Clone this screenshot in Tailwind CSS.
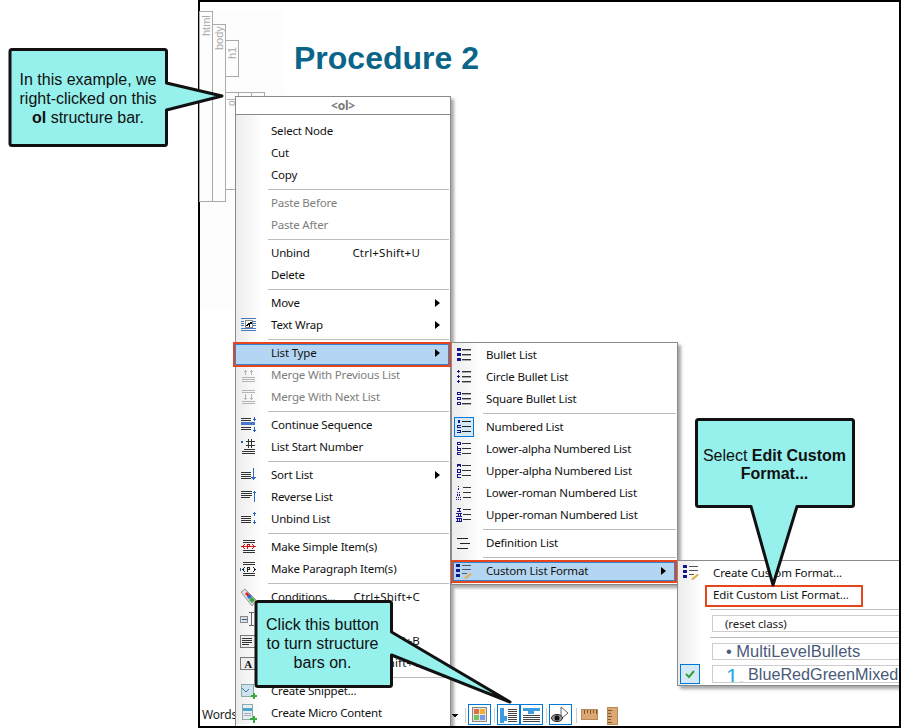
<!DOCTYPE html>
<html lang="en">

<head>
    <meta charset="UTF-8">
    <title>Procedure 2</title>
    <script src="https://cdn.jsdelivr.net/npm/@tailwindcss/browser@4"></script>
</head>

<body class="bg-white overflow-hidden">
    <div class="relative w-[901px] h-[728px] overflow-hidden font-['Liberation_Sans',sans-serif]">

        <!-- editor window -->
        <div class="absolute left-[198px] top-0 w-[703px] h-[728px] border-2 border-black bg-white">
            <div class="absolute left-0 top-[8px] w-[84px] h-[300px] bg-[#fdfdfd]"></div>
            <!-- structure bars -->
            <div class="absolute -left-px top-[9px] w-[14px] h-[191px] border border-[#aaa] flex justify-center pt-[4px]"><span class="[writing-mode:vertical-rl] rotate-180 h-[20px] text-[11px] leading-none text-[#aaa]">html</span></div>
            <div class="absolute left-[12px] top-[22px] w-[14px] h-[178px] border border-[#aaa] flex justify-center pt-[3px]"><span class="[writing-mode:vertical-rl] rotate-180 h-[22px] text-[11px] leading-none text-[#aaa]">body</span></div>
            <div class="absolute left-[25px] top-[38px] w-[14px] h-[37px] border border-[#aaa] flex justify-center pt-[8px]"><span class="[writing-mode:vertical-rl] rotate-180 h-[10px] text-[11px] leading-none text-[#aaa]">h1</span></div>
            <div class="absolute left-[25px] top-[90px] w-[14px] h-[98px] border border-[#aaa] flex justify-center pt-[3px]"><span class="[writing-mode:vertical-rl] rotate-180 h-[10px] text-[10px] leading-none text-[#aaa]">ol</span></div>
            <div class="absolute left-[38px] top-[90px] w-[14px] h-[20px] border border-[#aaa]"></div>
            <div class="absolute left-[51px] top-[90px] w-[14px] h-[20px] border border-[#aaa]"></div>

            <h1 class="absolute left-[94px] top-[37px] text-[32px] leading-[38px] font-bold text-[#0b6588]">Procedure 2</h1>

            <!-- status bar -->
            <div class="absolute left-[2px] top-[705px] text-[12px] tracking-[-0.2px] leading-[16px] text-[#222] font-['Noto_Sans',sans-serif]">Words</div>
            <div class="absolute left-[252px] top-[700px] h-[26px] w-[170px]">
                <svg width="170" height="26" viewBox="0 0 170 26" shape-rendering="crispEdges">
                    <path d="M0 12h6l-3 4z" fill="#111"/>
                    <path d="M13.500 6v15M42.500 6v15M94.500 6v15M124.500 6v15" stroke="#ccc"/>
                    <g fill="none" stroke="#0078d7">
                        <rect x="16.500" y="2.500" width="22" height="20"/>
                        <rect x="45.500" y="2.500" width="22" height="20"/>
                        <rect x="68.500" y="2.500" width="22" height="20"/>
                        <rect x="97.500" y="2.500" width="22" height="20"/>
                    </g>
                    <!-- layout -->
                    <rect x="20.500" y="5.500" width="14" height="14" fill="#e4e4e4" stroke="#888"/>
                    <rect x="22" y="7" width="5" height="5" fill="#e0703c"/>
                    <rect x="28" y="7" width="5" height="5" fill="#f0b030"/>
                    <rect x="22" y="13" width="5" height="5" fill="#78c060"/>
                    <rect x="28" y="13" width="5" height="5" fill="#7c98e0"/>
                    <!-- structure bars, vertical -->
                    <rect x="48" y="6" width="4" height="15" fill="#3d9be0"/>
                    <rect x="52" y="14" width="3" height="5" fill="#3d9be0"/>
                    <path d="M56 7h9M56 9h9M56 11h9M56 13h9M56 15h9M56 17h9M56 19h9" stroke="#444"/>
                    <!-- structure bars, horizontal -->
                    <rect x="71" y="6" width="17" height="3" fill="#3d9be0"/>
                    <rect x="76" y="9" width="6" height="3" fill="#3d9be0"/>
                    <path d="M71 13h17M71 15h17M71 17h17M71 19h17" stroke="#444"/>
                    <!-- eye -->
                    <path d="M109 5v9M109 5l7 6-6 5" fill="none" stroke="#666" shape-rendering="auto"/>
                    <ellipse cx="105" cy="16" rx="5.500" ry="3.500" fill="#999" stroke="#222" shape-rendering="auto"/>
                    <circle cx="105" cy="16" r="2.500" fill="#111" shape-rendering="auto"/>
                    <!-- rulers -->
                    <rect x="129.500" y="7.500" width="16" height="10" fill="#dba873" stroke="#b98a58"/>
                    <path d="M132 8v4M135 8v3M138 8v4M141 8v3M144 8v4" stroke="#7a5530"/>
                    <rect x="155.500" y="5.500" width="10" height="17" fill="#dba873" stroke="#b98a58"/>
                    <path d="M156 8h4M156 11h3M156 14h4M156 17h3M156 20h4" stroke="#7a5530"/>
                </svg>
            </div>
        </div>

        <!-- context menu -->
        <div class="absolute left-[235px] top-[96px] w-[216px] h-[631px] border border-[#8a8a8a] bg-white shadow-[3px_3px_3px_rgba(0,0,0,0.35)] text-[11.5px] tracking-[-0.2px] text-[#111] font-['Noto_Sans',sans-serif]">
            <div class="h-[18px] border-b border-[#8a8a8a] flex items-center justify-center text-[12px] font-bold text-[#777]">&lt;ol&gt;</div>
            <div class="relative pt-[5px] bg-gradient-to-r from-[#ececec] from-0% to-white to-[12%]">

                <div class="flex items-center h-[22px] pl-[35px]">Select Node</div>
                <div class="flex items-center h-[22px] pl-[35px]">Cut</div>
                <div class="flex items-center h-[22px] pl-[35px]">Copy</div>
                <div class="h-[6px] ml-[32px] mr-[1px] flex items-center"><div class="h-px w-full bg-[#bdbdbd]"></div></div>

                <div class="flex items-center h-[22px] pl-[35px] text-[#7d7d7d]">Paste Before</div>
                <div class="flex items-center h-[22px] pl-[35px] text-[#7d7d7d]">Paste After</div>
                <div class="h-[6px] ml-[32px] mr-[1px] flex items-center"><div class="h-px w-full bg-[#bdbdbd]"></div></div>

                <div class="flex items-center h-[22px] pl-[35px]"><span class="w-[81px]">Unbind</span><span class="w-[68px] text-right tracking-[0.2px]">Ctrl+Shift+U</span></div>
                <div class="flex items-center h-[22px] pl-[35px]">Delete</div>
                <div class="h-[6px] ml-[32px] mr-[1px] flex items-center"><div class="h-px w-full bg-[#bdbdbd]"></div></div>

                <div class="relative flex items-center h-[22px] pl-[35px]">Move<span class="absolute left-[199px] top-[7px] border-y-[4px] border-l-[5px] border-y-transparent border-l-black"></span></div>
                <div class="relative flex items-center h-[22px] pl-[35px]">
                    <svg class="absolute left-[5px] top-[3px]" width="16" height="16" viewBox="0 0 16 16" shape-rendering="crispEdges"><path d="M0 1.500h15M0 11.500h15M0 13.500h15M0 4.500h3M12 4.500h3M0 6.500h3M12 6.500h3M0 8.500h3M12 8.500h3" stroke="#4a78b8"/><path d="M4 3.500h7v7h-7z" fill="#fff" stroke="#888"/><path d="M5 9l2-3h2v-1h2v2h-2v3h-1v-2h-1l-1 1z" fill="#000"/></svg>
                    Text Wrap<span class="absolute left-[199px] top-[7px] border-y-[4px] border-l-[5px] border-y-transparent border-l-black"></span></div>
                <div class="h-[6px] ml-[32px] mr-[1px] flex items-center"><div class="h-px w-full bg-[#bdbdbd]"></div></div>

                <div class="relative flex items-center h-[22px] pl-[35px]">
                    <div class="absolute -left-[3px] top-0 w-[218px] h-[25px] border-2 border-[#e8451c] bg-[#b5d6f2] shadow-[inset_0_0_0_1px_#2f84d4]"></div>
                    <span class="relative">List Type</span><span class="absolute left-[199px] top-[7px] border-y-[4px] border-l-[5px] border-y-transparent border-l-black"></span>
                </div>
                <div class="relative flex items-center h-[22px] pl-[35px] text-[#7d7d7d]">
                    <svg class="absolute left-[5px] top-[4px]" width="16" height="16" viewBox="0 0 16 16" shape-rendering="crispEdges"><path d="M1 9.500h13M1 11.500h13M1 13.500h13" stroke="#b5b5b5"/><path d="M4.500 2v5M3 3.500h3M10.500 2v5M9 3.500h3" stroke="#b5b5b5"/></svg>
                    Merge With Previous List</div>
                <div class="relative flex items-center h-[22px] pl-[35px] text-[#7d7d7d]">
                    <svg class="absolute left-[5px] top-[3px]" width="16" height="16" viewBox="0 0 16 16" shape-rendering="crispEdges"><path d="M1 1.500h13M1 3.500h13M1 14.500h13M1 12.500h13" stroke="#b5b5b5"/><path d="M4.500 5v6M3 9.500h3M10.500 5v6M9 9.500h3" stroke="#b5b5b5"/></svg>
                    Merge With Next List</div>
                <div class="h-[6px] ml-[32px] mr-[1px] flex items-center"><div class="h-px w-full bg-[#bdbdbd]"></div></div>

                <div class="relative flex items-center h-[22px] pl-[35px]">
                    <svg class="absolute left-[4px] top-[3px]" width="17" height="16" viewBox="0 0 17 16" shape-rendering="crispEdges"><path d="M1 1.500h10M1 3.500h10M1 10.500h10M1 12.500h10" stroke="#333"/><rect x="1" y="5" width="14" height="3" fill="#4a78c8"/><path d="M14.500 0v4M13 2.500h3M14.500 10v5M13 13.500h3" stroke="#2a5ab8"/></svg>
                    Continue Sequence</div>
                <div class="relative flex items-center h-[22px] pl-[35px]">
                    <svg class="absolute left-[4px] top-[2px]" width="17" height="17" viewBox="0 0 17 17" shape-rendering="crispEdges"><path d="M8.500 1v9M11.500 1v9M6 3.500h9M6 7.500h9" stroke="#333"/><path d="M1 3h2v2h-2z" fill="#2a5ab8"/><path d="M4 11.500h11M2 13.500h13M2 15.500h13" stroke="#333"/></svg>
                    List Start Number</div>
                <div class="h-[6px] ml-[32px] mr-[1px] flex items-center"><div class="h-px w-full bg-[#bdbdbd]"></div></div>

                <div class="relative flex items-center h-[22px] pl-[35px]">
                    <svg class="absolute left-[4px] top-[3px]" width="17" height="16" viewBox="0 0 17 16" shape-rendering="crispEdges"><path d="M1 5.500h10M1 7.500h10M1 9.500h10M1 11.500h10" stroke="#333"/><path d="M13.500 1v12M12 11.500h3M11 10.500h5" stroke="#2a6ac8"/></svg>
                    Sort List<span class="absolute left-[199px] top-[7px] border-y-[4px] border-l-[5px] border-y-transparent border-l-black"></span></div>
                <div class="relative flex items-center h-[22px] pl-[35px]">
                    <svg class="absolute left-[4px] top-[3px]" width="17" height="16" viewBox="0 0 17 16" shape-rendering="crispEdges"><path d="M1 2.500h11M1 4.500h11M1 6.500h11M1 8.500h9" stroke="#333"/><path d="M14.500 2v11M13 3.500h3" stroke="#2a6ac8"/></svg>
                    Reverse List</div>
                <div class="relative flex items-center h-[22px] pl-[35px]">
                    <svg class="absolute left-[4px] top-[3px]" width="17" height="16" viewBox="0 0 17 16" shape-rendering="crispEdges"><path d="M1 5.500h10M1 7.500h10M1 9.500h10M1 11.500h10" stroke="#333"/><path d="M14.500 1v4M13 2.500h3M14.500 9v4M13 11.500h3" stroke="#2a6ac8"/></svg>
                    Unbind List</div>
                <div class="h-[6px] ml-[32px] mr-[1px] flex items-center"><div class="h-px w-full bg-[#bdbdbd]"></div></div>

                <div class="relative flex items-center h-[22px] pl-[35px]">
                    <svg class="absolute left-[4px] top-[3px]" width="17" height="16" viewBox="0 0 17 16" shape-rendering="crispEdges"><path d="M3 1.500h12M3 3.500h12M3 11.500h12M3 13.500h12" stroke="#333"/><path d="M1 7.500h15" stroke="#e02020"/><path d="M5 5l-2 2.500 2 2.500M12 5l2 2.500-2 2.500M7.500 5v5M7.500 5.500h2v2h-2" fill="none" stroke="#c01010"/></svg>
                    Make Simple Item(s)</div>
                <div class="relative flex items-center h-[22px] pl-[35px]">
                    <svg class="absolute left-[4px] top-[3px]" width="17" height="16" viewBox="0 0 17 16" shape-rendering="crispEdges"><path d="M3 1.500h12M3 3.500h12M3 12.500h12M3 14.500h12" stroke="#333"/><path d="M5 6l-2 2.500 2 2.500M13 6l2 2.500-2 2.500M7.500 6v5M7.500 6.500h2v2h-2" fill="none" stroke="#222"/><path d="M0 7h1v3h-1z" fill="#2a5ab8"/></svg>
                    Make Paragraph Item(s)</div>
                <div class="h-[6px] ml-[32px] mr-[1px] flex items-center"><div class="h-px w-full bg-[#bdbdbd]"></div></div>

                <div class="relative flex items-center h-[22px] pl-[35px]">
                    <svg class="absolute left-[3px] top-[2px]" width="20" height="20" viewBox="0 0 20 20"><path d="M2 4l4-3 11 11-4 6z" fill="#ddd" stroke="#999"/><path d="M6 6l2-2 3 3-2 2z" fill="#d22"/><path d="M8 9l3-3 2 3-3 2z" fill="#2a6ad0"/><path d="M10 12l3-3 3 3-3 3z" fill="#3aa83a"/></svg>
                    <span class="w-[81px]">Conditions...</span><span class="w-[68px] text-right tracking-[0.2px]">Ctrl+Shift+C</span></div>
                <div class="relative flex items-center h-[22px] pl-[35px]">
                    <svg class="absolute left-[4px] top-[3px]" width="17" height="16" viewBox="0 0 17 16" shape-rendering="crispEdges"><rect x="0.500" y="5.500" width="7" height="6" fill="#ddd" stroke="#888"/><path d="M2 8.500h5" stroke="#2a5ab8"/><path d="M11.500 1v14M9 1.500h5M9 14.500h5" stroke="#666"/></svg>
                </div>
                <div class="relative flex items-center h-[22px] pl-[35px]">
                    <svg class="absolute left-[4px] top-[3px]" width="17" height="16" viewBox="0 0 17 16" shape-rendering="crispEdges"><rect x="0.500" y="2.500" width="15" height="12" fill="#eee" stroke="#777"/><path d="M2 5.500h10M2 7.500h10M2 9.500h10M2 11.500h7" stroke="#333"/></svg>
                    <span class="ml-[81px] w-[68px] text-right tracking-[0.2px]">Ctrl+B</span></div>
                <div class="relative flex items-center h-[22px] pl-[35px]">
                    <svg class="absolute left-[4px] top-[3px]" width="17" height="16" viewBox="0 0 17 16"><rect x="0.500" y="2.500" width="15" height="12" fill="#eee" stroke="#777"/><text x="8" y="12.500" text-anchor="middle" font-family="Liberation Serif" font-weight="700" font-size="11" fill="#111">A</text></svg>
                    <span class="ml-[81px] w-[68px] text-right tracking-[0.2px]">Ctrl+Shift+T</span></div>
                <div class="h-[6px] ml-[32px] mr-[1px] flex items-center"><div class="h-px w-full bg-[#bdbdbd]"></div></div>

                <div class="relative flex items-center h-[22px] pl-[35px]">
                    <svg class="absolute left-[5px] top-[3px]" width="17" height="18" viewBox="0 0 17 18" shape-rendering="crispEdges"><rect x="0.500" y="1.500" width="12" height="12" fill="#cfe3ee" stroke="#8aa"/><path d="M1 5l4 4 3-3" fill="none" stroke="#3a7aa0"/><rect x="10" y="12" width="6" height="2" fill="#3aa83a"/><rect x="12" y="10" width="2" height="6" fill="#3aa83a"/></svg>
                    Create Snippet...</div>
                <div class="relative flex items-center h-[22px] pl-[35px]">
                    <svg class="absolute left-[6px] top-[2px]" width="16" height="19" viewBox="0 0 16 19" shape-rendering="crispEdges"><rect x="0.500" y="0.500" width="10" height="15" fill="#e6eef2" stroke="#8aa"/><rect x="1" y="4" width="9" height="3" fill="#49a5c8"/><path d="M2 9.500h7M2 11.500h7" stroke="#aab"/><rect x="8" y="14" width="7" height="2" fill="#3aa83a"/><rect x="10.500" y="11.500" width="2" height="7" fill="#3aa83a"/></svg>
                    Create Micro Content</div>
            </div>
        </div>

        <!-- list type submenu -->
        <div class="absolute left-[451px] top-[342px] w-[227px] h-[243px] border border-[#8a8a8a] bg-white shadow-[3px_3px_3px_rgba(0,0,0,0.35)] text-[11.5px] tracking-[-0.18px] text-[#111] font-['Noto_Sans',sans-serif]">
            <div class="relative pt-px h-full bg-gradient-to-r from-[#ececec] from-0% to-white to-[13%]">
                <div class="relative flex items-center h-[22px] pl-[34px]">
                    <svg class="absolute left-[4px] top-[3px]" width="16" height="16" viewBox="0 0 16 16" shape-rendering="crispEdges"><path d="M1 1h4v3h-4zM1 6h4v3h-4zM1 11h4v3h-4z" fill="#14148c"/><path d="M6 2.500h9M6 7.500h9M6 12.500h9" stroke="#333"/><path d="M6 3.500h9M6 8.500h9M6 13.500h9" stroke="#aaa"/></svg>
                    Bullet List</div>
                <div class="relative flex items-center h-[22px] pl-[34px]">
                    <svg class="absolute left-[4px] top-[3px]" width="16" height="16" viewBox="0 0 16 16" shape-rendering="crispEdges"><path d="M2 1h1v1h1v1h-1v1h-1v-1h-1v-1h1zM2 6h1v1h1v1h-1v1h-1v-1h-1v-1h1zM2 11h1v1h1v1h-1v1h-1v-1h-1v-1h1z" fill="#14148c"/><path d="M6 2.500h9M6 7.500h9M6 12.500h9" stroke="#333"/><path d="M6 3.500h9M6 8.500h9M6 13.500h9" stroke="#aaa"/></svg>
                    Circle Bullet List</div>
                <div class="relative flex items-center h-[22px] pl-[34px]">
                    <svg class="absolute left-[4px] top-[3px]" width="16" height="16" viewBox="0 0 16 16" shape-rendering="crispEdges"><path d="M1.500 1.500h3v2h-3zM1.500 6.500h3v2h-3zM1.500 11.500h3v2h-3z" fill="none" stroke="#14148c"/><path d="M6 2.500h9M6 7.500h9M6 12.500h9" stroke="#333"/><path d="M6 3.500h9M6 8.500h9M6 13.500h9" stroke="#aaa"/></svg>
                    Square Bullet List</div>
                <div class="h-[6px] ml-[31px] mr-[1px] flex items-center"><div class="h-px w-full bg-[#bdbdbd]"></div></div>
                <div class="relative flex items-center h-[22px] pl-[34px]">
                    <div class="absolute left-[2px] top-[1px] w-[20px] h-[20px] border border-[#0078d7] bg-[#d4e8f8]"></div>
                    <svg class="absolute left-[4px] top-[3px]" width="16" height="16" viewBox="0 0 16 16" shape-rendering="crispEdges"><path d="M2 1h2v3h-2zM1 6h4v1h-3v1h3v1h-4zM1 11h4v3h-4v-1h3v-1h-3z" fill="#14148c"/><path d="M6 2.500h9M6 7.500h9M6 12.500h9" stroke="#222"/></svg>
                    Numbered List</div>
                <div class="relative flex items-center h-[22px] pl-[34px]">
                    <svg class="absolute left-[4px] top-[3px]" width="16" height="16" viewBox="0 0 16 16" shape-rendering="crispEdges"><path d="M1.500 1.500h3v2h-3zM1.500 5v4h3v-2h-3M4.500 11.500h-3v2h3" fill="none" stroke="#14148c"/><path d="M6 2.500h9M6 7.500h9M6 12.500h9" stroke="#333"/></svg>
                    Lower-alpha Numbered List</div>
                <div class="relative flex items-center h-[22px] pl-[34px]">
                    <svg class="absolute left-[4px] top-[3px]" width="16" height="16" viewBox="0 0 16 16" shape-rendering="crispEdges"><path d="M1.500 4v-3h3v3M1 2.500h4M1.500 6v3h3v-3zM4.500 11.500h-3v3h3" fill="none" stroke="#14148c"/><path d="M6 2.500h9M6 7.500h9M6 12.500h9" stroke="#333"/></svg>
                    Upper-alpha Numbered List</div>
                <div class="relative flex items-center h-[22px] pl-[34px]">
                    <svg class="absolute left-[4px] top-[3px]" width="16" height="16" viewBox="0 0 16 16" shape-rendering="crispEdges"><path d="M2 1h1v1h-1zM2 3h1v2h-1zM1 7h1v1h-1zM3 7h1v1h-1zM1 9h1v2h-1zM3 9h1v2h-1zM0 12h1v1h-1zM2 12h1v1h-1zM4 12h1v1h-1zM0 14h1v1h-1zM2 14h1v1h-1zM4 14h1v1h-1z" fill="#14148c"/><path d="M7 2.500h8M7 7.500h8M7 12.500h8" stroke="#333"/></svg>
                    Lower-roman Numbered List</div>
                <div class="relative flex items-center h-[22px] pl-[34px]">
                    <svg class="absolute left-[4px] top-[3px]" width="16" height="16" viewBox="0 0 16 16" shape-rendering="crispEdges"><path d="M1 1.500h4M3 1v4M1 4.500h4M0 6.500h6M2.500 7v3M4 7v3M0 9.500h6M0 11.500h6M1.500 12v3M3.500 12v3M5.500 12v3M0 14.500h6" stroke="#14148c"/><path d="M7 2.500h8M7 7.500h8M7 12.500h8" stroke="#333"/></svg>
                    Upper-roman Numbered List</div>
                <div class="h-[6px] ml-[31px] mr-[1px] flex items-center"><div class="h-px w-full bg-[#bdbdbd]"></div></div>
                <div class="relative flex items-center h-[22px] pl-[34px]">
                    <svg class="absolute left-[4px] top-[3px]" width="16" height="16" viewBox="0 0 16 16" shape-rendering="crispEdges"><path d="M1 3.500h11M4 8.500h10M1 13.500h11" stroke="#222"/></svg>
                    Definition List</div>
                <div class="h-[6px] ml-[31px] mr-[1px] flex items-center"><div class="h-px w-full bg-[#bdbdbd]"></div></div>
                <div class="relative flex items-center h-[22px] pl-[34px]">
                    <div class="absolute -left-px top-0 w-[226px] h-[23px] border-2 border-[#e8451c] bg-[#b5d6f2] shadow-[inset_0_0_0_1px_#2f84d4]"></div>
                    <svg class="absolute left-[3px] top-[3px]" width="18" height="17" viewBox="0 0 18 17" shape-rendering="crispEdges"><path d="M1 1h4v3h-4zM1 6h4v3h-4zM1 11h4v3h-4z" fill="#14148c"/><path d="M7 2.500h9M7 6.500h9M7 10.500h5" stroke="#555"/><path d="M9 15l6-5 2 1-6 5z" fill="#e0b040" shape-rendering="auto"/></svg>
                    <span class="relative">Custom List Format</span><span class="absolute left-[209px] top-[7px] border-y-[4px] border-l-[5px] border-y-transparent border-l-black"></span>
                </div>
            </div>
        </div>

        <!-- custom list format submenu -->
        <div class="absolute left-[677px] top-[560px] w-[224px] h-[126px] border-y border-l border-[#8a8a8a] bg-white shadow-[3px_3px_3px_rgba(0,0,0,0.35)] text-[11.5px] tracking-[-0.1px] text-[#111] font-['Noto_Sans',sans-serif]">
            <div class="relative h-full pt-px bg-gradient-to-r from-[#ececec] from-0% to-white to-[11%]">
                <svg class="absolute left-[4px] top-[3px]" width="18" height="17" viewBox="0 0 18 17" shape-rendering="crispEdges"><path d="M1 1h4v3h-4zM1 6h4v3h-4zM1 11h4v3h-4z" fill="#14148c"/><path d="M7 2.500h9M7 6.500h9M7 10.500h5" stroke="#555"/><path d="M9 15l6-5 2 1-6 5z" fill="#e0b040" shape-rendering="auto"/></svg>
                <div class="flex items-center h-[22px] pl-[35px]">Create Custom Format...</div>
                <div class="relative flex items-center h-[22px] pl-[35px]">Edit Custom List Format...
                    <div class="absolute left-[27px] top-px w-[158px] h-[22px] border-2 border-[#e8451c]"></div>
                </div>
                <div class="h-[6px] ml-[32px] flex items-center"><div class="h-px w-full bg-[#bdbdbd]"></div></div>
                <div class="ml-[34px] mt-[3px] h-[17px] border border-[#ccc] flex items-center pl-[12px] text-[#222]">(reset class)</div>
                <div class="h-[11px] ml-[32px] flex items-center"><div class="h-px w-full bg-[#bdbdbd]"></div></div>
                <div class="ml-[34px] h-[17px] border border-[#ccc] flex items-center pl-[13px] tracking-normal text-[16.5px] text-[#4a5a78] font-['Liberation_Sans',sans-serif]">• MultiLevelBullets</div>
                <div class="relative ml-[34px] mt-[5px] h-[18px] border border-[#ccc] flex items-center pl-[35px] tracking-normal text-[16.2px] text-[#4a5a78] font-['Liberation_Sans',sans-serif] whitespace-nowrap overflow-hidden"><span class="absolute left-[13px] top-px text-[22px] leading-[20px] text-[#2aa8e8]">1.</span>BlueRedGreenMixed</div>
                <div class="absolute left-[2px] top-[103px] w-[20px] h-[20px] border border-[#0078d7] bg-[#d4e8f8] flex items-center justify-center">
                    <svg width="12" height="10" viewBox="0 0 12 10"><path d="M2 5l3 3 5-6" fill="none" stroke="#3aa03a" stroke-width="2"/></svg>
                </div>
            </div>
        </div>

        <!-- window edge runs over the menus -->
        <div class="absolute left-[899px] top-0 w-[2px] h-[728px] bg-black"></div>
        <div class="absolute left-[198px] top-[726px] w-[703px] h-[2px] bg-black"></div>

        <!-- callouts -->
        <svg class="absolute left-0 top-0 pointer-events-none" width="901" height="728" viewBox="0 0 901 728">
            <g fill="#96f0ec" stroke="#111" stroke-width="3" stroke-linejoin="round">
                <path d="M12 49.500H164.500a2 2 0 0 1 2 2V83L222 96L166.500 110V143.500a2 2 0 0 1-2 2H12a2 2 0 0 1-2-2V51.500a2 2 0 0 1 2-2z"/>
                <path d="M258 601.500H389.500a2 2 0 0 1 2 2V632L510 702L391.500 655V684.500a2 2 0 0 1-2 2H258a2 2 0 0 1-2-2V603.500a2 2 0 0 1 2-2z"/>
                <path d="M698.500 419.500H851.500a2 2 0 0 1 2 2V504.500a2 2 0 0 1-2 2H797L773 585L751 506.500H698.500a2 2 0 0 1-2-2V421.500a2 2 0 0 1 2-2z"/>
            </g>
        </svg>
        <div class="absolute left-[8px] top-[70px] w-[160px] text-center text-[16px] leading-[19px] text-[#111]">In this example, we<br>right-clicked on this<br><b>ol</b> structure bar.</div>
        <div class="absolute left-[254px] top-[615px] w-[137px] text-center text-[16px] leading-[19px] text-[#111]">Click this button<br>to turn structure<br>bars on.</div>
        <div class="absolute left-[695px] top-[447px] w-[159px] text-center text-[16px] leading-[18px] text-[#111]">Select <b>Edit Custom Format...</b></div>
    </div>
</body>

</html>
